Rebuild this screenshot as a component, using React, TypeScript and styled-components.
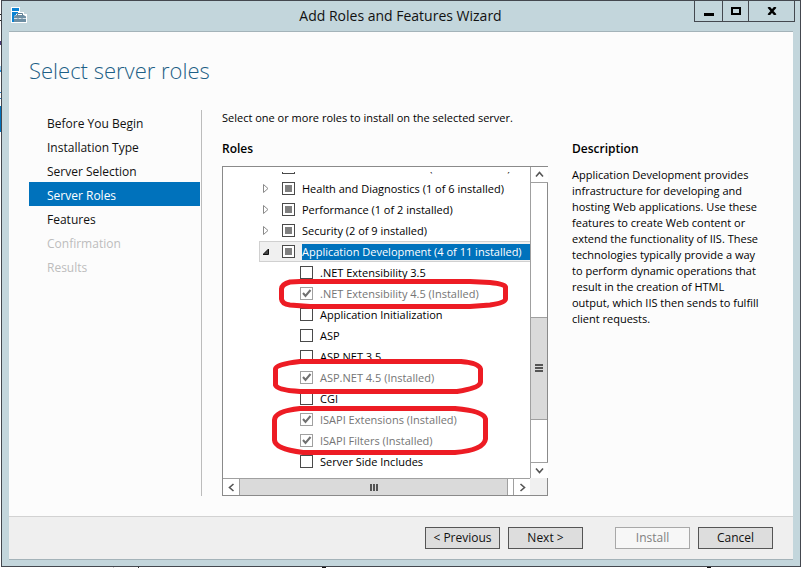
import React, { useEffect, useRef } from "react";
import styled, { createGlobalStyle, css } from "styled-components";

const GlobalStyle = createGlobalStyle`
  *, *::before, *::after { box-sizing: border-box; }
  html, body, #root { height: 100%; }
  body {
    margin: 0;
    background: #fff;
    color: #000;
    font-family: "Segoe UI", "Open Sans", "Noto Sans", sans-serif;
    font-size: 11px;
    line-height: 16px;
  }
  button, input { font: inherit; color: inherit; margin: 0; padding: 0; }
  h1, h2, p, ul { margin: 0; padding: 0; font-weight: 400; }
  ul { list-style: none; }
`;

const Desktop = styled.div`
  min-height: 100vh;
  padding: 0 1px 1px;
  display: flex;
  background:
    linear-gradient(#fff 14px, #222 14px 15px, #fff 15px 20px, #222 20px 21px, #fff 21px 41px, #4b3a78 41px 45px, #fff 45px 66px, #9fd0f0 66px 70px, #2a8fd8 70px 72px, #fff 72px 92px, #2a7fc0 92px 93px, #fff 93px 98px, #2a7fc0 98px 99px, #fff 99px 106px, #0072bc 106px 132px, #fff 132px) left / 1px 100% no-repeat,
    linear-gradient(90deg, #fff 113px, #ccc 113px 114px, #fff 114px 138px, #333 138px 139px, #fff 139px 322px, #111 322px 326px, #fff 326px 707px, #111 707px 711px, #fff 711px) bottom / 100% 1px no-repeat,
    #fff;
`;

const Window = styled.div`
  flex: 1;
  min-width: 0;
  display: flex;
  flex-direction: column;
  border: 1px solid #44484f;
  background: #c3d6dc;
  padding: 0 7px 6px;
`;

const TitleBar = styled.header`
  display: grid;
  grid-template-columns: 98px 1fr 101px;
  height: 30px;
  flex: none;
  margin-right: -2px;
`;

const TitleIcon = styled.svg`
  display: block;
  margin: 6px 0 0 1px;
`;

const Title = styled.h1`
  font-size: 14px;
  line-height: 30px;
  text-align: center;
  color: #111;
  white-space: nowrap;
`;

const WindowControls = styled.div`
  display: grid;
  grid-template-columns: 28px 26px 1fr;
  height: 21px;
  border: 1px solid #44484f;
  border-top: 0;
`;

const ControlButton = styled.button`
  display: grid;
  place-items: center;
  border: 0;
  border-right: 1px solid #44484f;
  background: transparent;
  &:last-child { border-right: 0; }
`;

const Client = styled.div`
  flex: 1;
  display: flex;
  flex-direction: column;
  background: #fcfcfc;
  border-top: 1px solid #a4b3b9;
  border-bottom: 1px solid #a4b3b9;
`;

const Heading = styled.h2`
  && { padding: 22px 20px 0; }
  font-size: 22px;
  line-height: 32px;
  font-weight: 300;
  color: #1d5f86;
`;

const Body = styled.div`
  flex: 1;
  display: grid;
  grid-template-columns: 173px 1fr 201px;
  padding: 24px 20px 20px;
`;

const Nav = styled.nav`
  border-right: 1px solid #bcbcbc;
  padding-right: 1px;
`;

const NavLink = styled.a<{ $state?: "current" | "disabled" }>`
  display: block;
  padding: 4px 0 0 18px;
  font-size: 12px;
  line-height: 20px;
  color: #111;
  text-decoration: none;
  ${({ $state }) => $state === "current" && css`background: #0072bc; color: #fff;`}
  ${({ $state }) => $state === "disabled" && css`color: #bdbdbd;`}
`;

const Main = styled.main`
  min-width: 0;
  padding: 0 24px 0 20px;
`;

const Intro = styled.p`
  white-space: nowrap;
`;

const SectionTitle = styled.h2`
  font-size: 12px;
  font-weight: 600;
`;

const RolesTitle = styled(SectionTitle)`
  margin: 15px 0 9px;
`;

const TreeBox = styled.div`
  position: relative;
  display: grid;
  grid-template-columns: 1fr 17px;
  grid-template-rows: 1fr 17px;
  border: 1px solid #8a8a8a;
  background: #fff;
`;

const TreeView = styled.div`
  margin-top: 5px;
  overflow: hidden;
  padding-bottom: 6px;
`;

const Tree = styled.ul`
  && { margin-top: -15px; }
`;

const Row = styled.li<{ $selected?: boolean; $child?: boolean }>`
  display: flex;
  align-items: center;
  height: 21px;
  margin-left: 36px;
  padding-left: ${({ $child }) => ($child ? 41 : 4)}px;
  white-space: nowrap;
  ${({ $selected }) =>
    $selected && css`background: #f0f0f0; box-shadow: inset 1px 1px #d0d0d0, inset 0 -1px #d0d0d0;`}
`;

const Expander = styled.button`
  flex: none;
  width: 19px;
  height: 13px;
  border: 0;
  background: none;
  display: flex;
  align-items: center;
`;

const Item = styled.label<{ $disabled?: boolean }>`
  display: flex;
  align-items: center;
  gap: 7px;
  color: ${({ $disabled }) => ($disabled ? "#757575" : "#000")};
`;

const ItemText = styled.span<{ $selected?: boolean }>`
  ${({ $selected }) => $selected && css`background: #0072bc; color: #fff; padding-right: 8px;`}
`;

const Tick = styled.span`
  display: grid;
  flex: none;
  & > * { grid-area: 1 / 1; }
  & > svg { pointer-events: none; }
`;

const Box = styled.input`
  appearance: none;
  width: 13px;
  height: 13px;
  border: 1px solid #4a4a4a;
  background: #fff;
  &:disabled { border-color: #a0a0a0; }
  &:indeterminate { background: #808080; box-shadow: inset 0 0 0 2px #fff; }
`;

const VBar = styled.div`
  display: flex;
  flex-direction: column;
  border-left: 1px solid #a0a0a0;
`;

const HBar = styled.div`
  display: flex;
  border-top: 1px solid #a0a0a0;
`;

const BarButton = styled.button<{ $edge: "top" | "bottom" | "left" | "right" }>`
  flex: none;
  width: 17px;
  height: 16px;
  display: grid;
  place-items: center;
  background: #fff;
  border: 0 solid #a0a0a0;
  ${({ $edge }) => css`border-${$edge}-width: 1px;`}
`;

const Space = styled.div<{ $grow: number }>`
  flex: ${({ $grow }) => $grow} 1 0;
`;

const Thumb = styled.div<{ $grow: number; $vertical?: boolean }>`
  flex: ${({ $grow }) => $grow} 1 0;
  display: grid;
  place-items: center;
  background: #dadada;
  border: 0 solid #a0a0a0;
  border-width: ${({ $vertical }) => ($vertical ? "1px 0" : "0 1px 0 0")};
`;

const Corner = styled.div`
  background: #f0f0f0;
`;

const Marks = styled.svg`
  position: absolute;
  left: 45px;
  top: 107px;
  pointer-events: none;
`;

const Aside = styled.aside`
  padding-top: 31px;
`;

const Description = styled.p`
  && { margin-top: 10px; }
  padding-right: 12px;
`;

const Footer = styled.footer`
  display: flex;
  justify-content: flex-end;
  gap: 8px;
  padding: 10px 20px;
  border-top: 1px solid #d2d2d2;
  background: #efefef;
`;

const ActionButton = styled.button<{ $apart?: boolean }>`
  width: 75px;
  height: 22px;
  margin-left: ${({ $apart }) => ($apart ? 24 : 0)}px;
  border: 1px solid #555;
  background: #dddddd;
  font-size: 12px;
  line-height: 20px;
  color: #111;
  &:disabled { border-color: #a8a8a8; background: #f7f7f7; color: #808080; }
`;

type RoleState = "mixed" | "off" | "installed";

function CheckBox({ state, id }: { state: RoleState; id: string }) {
  const ref = useRef<HTMLInputElement>(null);
  useEffect(() => {
    if (ref.current) ref.current.indeterminate = state === "mixed";
  }, [state]);
  return (
    <Tick>
      <Box ref={ref} id={id} type="checkbox" defaultChecked={state === "installed"} disabled={state === "installed"} />
      {state === "installed" && (
        <svg width="13" height="13" viewBox="0 0 13 13" aria-hidden="true">
          <path d="M3 6 5.500 9 10.500 3" fill="none" stroke="#707070" strokeWidth="2" />
        </svg>
      )}
    </Tick>
  );
}

const groups = [
  "Common HTTP Features (5 of 6 installed)",
  "Health and Diagnostics (1 of 6 installed)",
  "Performance (1 of 2 installed)",
  "Security (2 of 9 installed)",
  "Application Development (4 of 11 installed)",
];

const services: [string, RoleState][] = [
  [".NET Extensibility 3.5", "off"],
  [".NET Extensibility 4.5 (Installed)", "installed"],
  ["Application Initialization", "off"],
  ["ASP", "off"],
  ["ASP.NET 3.5", "off"],
  ["ASP.NET 4.5 (Installed)", "installed"],
  ["CGI", "off"],
  ["ISAPI Extensions (Installed)", "installed"],
  ["ISAPI Filters (Installed)", "installed"],
  ["Server Side Includes", "off"],
];

const steps: [string, ("current" | "disabled")?][] = [
  ["Before You Begin"],
  ["Installation Type"],
  ["Server Selection"],
  ["Server Roles", "current"],
  ["Features"],
  ["Confirmation", "disabled"],
  ["Results", "disabled"],
];

function Chevron({ d }: { d: string }) {
  return (
    <svg width="9" height="9" viewBox="0 0 9 9" aria-hidden="true">
      <path d={d} fill="none" stroke="#555" strokeWidth="1.6" />
    </svg>
  );
}

function Grip({ vertical }: { vertical?: boolean }) {
  return (
    <svg width="8" height="8" viewBox="0 0 8 8" aria-hidden="true">
      <path d={vertical ? "M0 1H8M0 4H8M0 7H8" : "M1 1V8M4 1V8M7 1V8"} stroke="#555" strokeWidth="2" />
    </svg>
  );
}

export default function App() {
  return (
    <>
      <GlobalStyle />
      <Desktop>
        <Window>
          <TitleBar>
            <TitleIcon width="18" height="18" viewBox="0 0 18 18" aria-hidden="true">
              <path d="M1 0H10V5H14V7H17V16H1Z" fill="#fff" />
              <path d="M2 1H9V4H2ZM2 5H8V6L6 7V8L4 9V15H2Z" fill="#0a82d2" />
              <path d="M4 9.500 6.500 8H13.500L16 9.500V15H4Z" fill="#6d8ea3" />
              <path d="M7.500 8.500V6.500H12.500V8.500" fill="none" stroke="#5d7e93" />
              <path d="M4 11.500H7.500M8.500 11.500H11.500M12.500 11.500H16" fill="none" stroke="#d5e0e6" />
            </TitleIcon>
            <Title>Add Roles and Features Wizard</Title>
            <WindowControls>
              <ControlButton aria-label="Minimize">
                <svg width="10" height="10" viewBox="0 0 10 10"><path d="M0 7H10V10H0Z" /></svg>
              </ControlButton>
              <ControlButton aria-label="Maximize">
                <svg width="10" height="8" viewBox="0 0 10 8"><path d="M1 1H9V7H1Z" fill="none" stroke="#000" strokeWidth="2" /></svg>
              </ControlButton>
              <ControlButton aria-label="Close">
                <svg width="10" height="8" viewBox="0 0 10 8"><path d="M1.500 0 8.500 8M8.500 0 1.500 8" stroke="#000" strokeWidth="2.500" /></svg>
              </ControlButton>
            </WindowControls>
          </TitleBar>
          <Client>
            <Heading>Select server roles</Heading>
            <Body>
              <Nav aria-label="Wizard steps">
                {steps.map(([name, state]) => (
                  <NavLink key={name} href="#" $state={state} aria-disabled={state === "disabled"} aria-current={state === "current" ? "step" : undefined}>
                    {name}
                  </NavLink>
                ))}
              </Nav>
              <Main>
                <Intro>Select one or more roles to install on the selected server.</Intro>
                <RolesTitle>Roles</RolesTitle>
                <TreeBox>
                  <TreeView>
                    <Tree>
                      {groups.map((name, i) => {
                        const open = i === groups.length - 1;
                        return (
                          <Row key={name} $selected={open}>
                            <Expander aria-label={open ? "Collapse" : "Expand"}>
                              <svg width="8" height="11" viewBox="0 0 8 11">
                                {open ? (
                                  <path d="M5.500 3V8.500H0Z" fill="#444" stroke="#111" />
                                ) : (
                                  <path d="M.5 1.500 5 5.500 .5 9.500Z" fill="#fff" stroke="#8a8a8a" />
                                )}
                              </svg>
                            </Expander>
                            <Item htmlFor={`group-${i}`}>
                              <CheckBox state="mixed" id={`group-${i}`} />
                              <ItemText $selected={open}>{name}</ItemText>
                            </Item>
                          </Row>
                        );
                      })}
                      {services.map(([name, state], i) => (
                        <Row key={name} $child>
                          <Item htmlFor={`service-${i}`} $disabled={state === "installed"}>
                            <CheckBox state={state} id={`service-${i}`} />
                            <ItemText>{name}</ItemText>
                          </Item>
                        </Row>
                      ))}
                    </Tree>
                  </TreeView>
                  <VBar>
                    <BarButton $edge="bottom" aria-label="Scroll up"><Chevron d="M1 6.500 4.500 2.500 8 6.500" /></BarButton>
                    <Space $grow={134} />
                    <Thumb $grow={102} $vertical><Grip vertical /></Thumb>
                    <Space $grow={42} />
                    <BarButton $edge="top" aria-label="Scroll down"><Chevron d="M1 2.500 4.500 6.500 8 2.500" /></BarButton>
                  </VBar>
                  <HBar>
                    <BarButton $edge="right" aria-label="Scroll left"><Chevron d="M6.500 1 2.500 4.500 6.500 8" /></BarButton>
                    <Thumb $grow={269}><Grip /></Thumb>
                    <Space $grow={5} />
                    <BarButton $edge="left" aria-label="Scroll right"><Chevron d="M2.500 1 6.500 4.500 2.500 8" /></BarButton>
                  </HBar>
                  <Corner />
                  <Marks width="250" height="190" viewBox="268 274 250 190" fill="none" stroke="#ed1c24" strokeWidth="5" strokeLinejoin="round" aria-hidden="true">
                    <path d="M300 281.500H470L490 282.500Q505 284 505.500 287V299Q505 303 490 305L470 306.500H310L290 305Q282 304 281.500 299V289Q282 284 290 282Z" />
                    <path d="M300 361.500H461Q479 363 480.500 369V382Q480 388 457 391.500H300Q277 390 275.500 385V369Q276 364 300 361.500Z" />
                    <path d="M300 408.500H455Q484 411 485.500 419V439Q484 450 455 452.500H303Q275 449 274.500 440V420Q275 411 300 408.500Z" />
                  </Marks>
                </TreeBox>
              </Main>
              <Aside>
                <SectionTitle>Description</SectionTitle>
                <Description>
                  Application Development provides infrastructure for developing and hosting Web applications. Use these features to create Web content or extend the functionality of IIS. These technologies typically provide a way to perform dynamic operations that result in the creation of HTML output, which IIS then sends to fulfill client requests.
                </Description>
              </Aside>
            </Body>
            <Footer>
              <ActionButton>&lt; Previous</ActionButton>
              <ActionButton>Next &gt;</ActionButton>
              <ActionButton $apart disabled>Install</ActionButton>
              <ActionButton>Cancel</ActionButton>
            </Footer>
          </Client>
        </Window>
      </Desktop>
    </>
  );
}
